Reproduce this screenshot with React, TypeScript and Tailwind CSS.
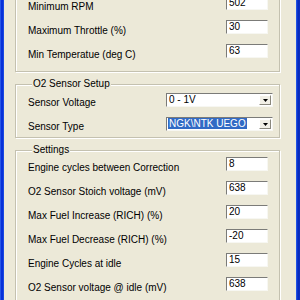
import type { ReactNode } from 'react'

const font = { fontFamily: '"Liberation Sans Narrow", "Liberation Sans", Arial, sans-serif' }

const sunken =
  'border border-t-[#7b7b78] border-l-[#7b7b78] border-r-[#f7f7f2] border-b-[#f7f7f2] bg-white'

function Field({ label, value }: { label: string; value: string }) {
  return (
    <div className="flex h-[14px] items-start justify-between">
      <span className="pt-[5px] leading-[12px]">{label}</span>
      <div className={`${sunken} w-[42px] h-[14px] pl-[2px] leading-[12px]`}>{value}</div>
    </div>
  )
}

function Combo({ label, value, selected }: { label: string; value: string; selected?: boolean }) {
  return (
    <div className="flex h-[14px] items-start justify-between">
      <span className="pt-[4px] leading-[12px]">{label}</span>
      <div className={`${sunken} w-[107px] h-[14px] flex items-center pl-[1px] pr-[1px]`}>
        <span
          className={`flex-1 leading-[12px] ${selected ? '' : 'pl-[1px]'}`}
        >
          {selected ? (
            <span className="bg-[#316ac5] text-white px-[1px]">{value}</span>
          ) : (
            value
          )}
        </span>
        <div className="w-[12px] h-[10px] bg-[#f1efe6] border border-t-white border-l-white border-r-[#8a887d] border-b-[#8a887d] flex items-center justify-center">
          <svg width="5" height="3" viewBox="0 0 5 3">
            <path d="M0 0h5L2.5 3z" fill="#000" />
          </svg>
        </div>
      </div>
    </div>
  )
}

function Group({
  title,
  children,
  className,
}: {
  title?: string
  children: ReactNode
  className?: string
}) {
  return (
    <fieldset
      className={`border border-[#c4c1b0] shadow-[inset_1px_1px_0_#fff,1px_1px_0_#fff] pl-[12px] flex flex-col gap-[10px] ${className ?? ''}`}
    >
      {title && (
        <legend className="ml-[4px] px-[1px] leading-[12px] bg-[#ece9d8]">{title}</legend>
      )}
      {children}
    </fieldset>
  )
}

export default function App() {
  return (
    <div className="w-[300px] h-[300px] flex overflow-hidden text-[10px] text-black" style={font}>
      <div className="w-[4px] bg-[linear-gradient(to_right,#3a6cf0,#0831d9,#0831d9,#2458e6)]" />

      <div className="flex-1 bg-[#ece9d8] pl-[11px] pr-[16px] overflow-hidden">
        <Group className="-mt-[13px] pt-[8px] pb-[13px] pr-[11px]">
          <Field label="Minimum RPM" value="502" />
          <Field label="Maximum Throttle (%)" value="30" />
          <Field label="Min Temperatue (deg C)" value="63" />
        </Group>

        <Group title="O2 Sensor Setup" className="mt-[6px] pt-[3px] pb-[6px] pr-[6px]">
          <Combo label="Sensor Voltage" value="0 - 1V" />
          <Combo label="Sensor Type" value="NGK\NTK UEGO" selected />
        </Group>

        <Group title="Settings" className="mt-[6px] pt-[1px] pb-[10px] pr-[11px]">
          <Field label="Engine cycles between Correction" value="8" />
          <Field label="O2 Sensor Stoich voltage (mV)" value="638" />
          <Field label="Max Fuel Increase (RICH) (%)" value="20" />
          <Field label="Max Fuel Decrease (RICH) (%)" value="-20" />
          <Field label="Engine Cycles at idle" value="15" />
          <Field label="O2 Sensor voltage @ idle (mV)" value="638" />
        </Group>
      </div>

      <div className="w-[4px] bg-[linear-gradient(to_right,#2d62ee,#0a35d0,#0729b8,#0a30c4)]" />
    </div>
  )
}
